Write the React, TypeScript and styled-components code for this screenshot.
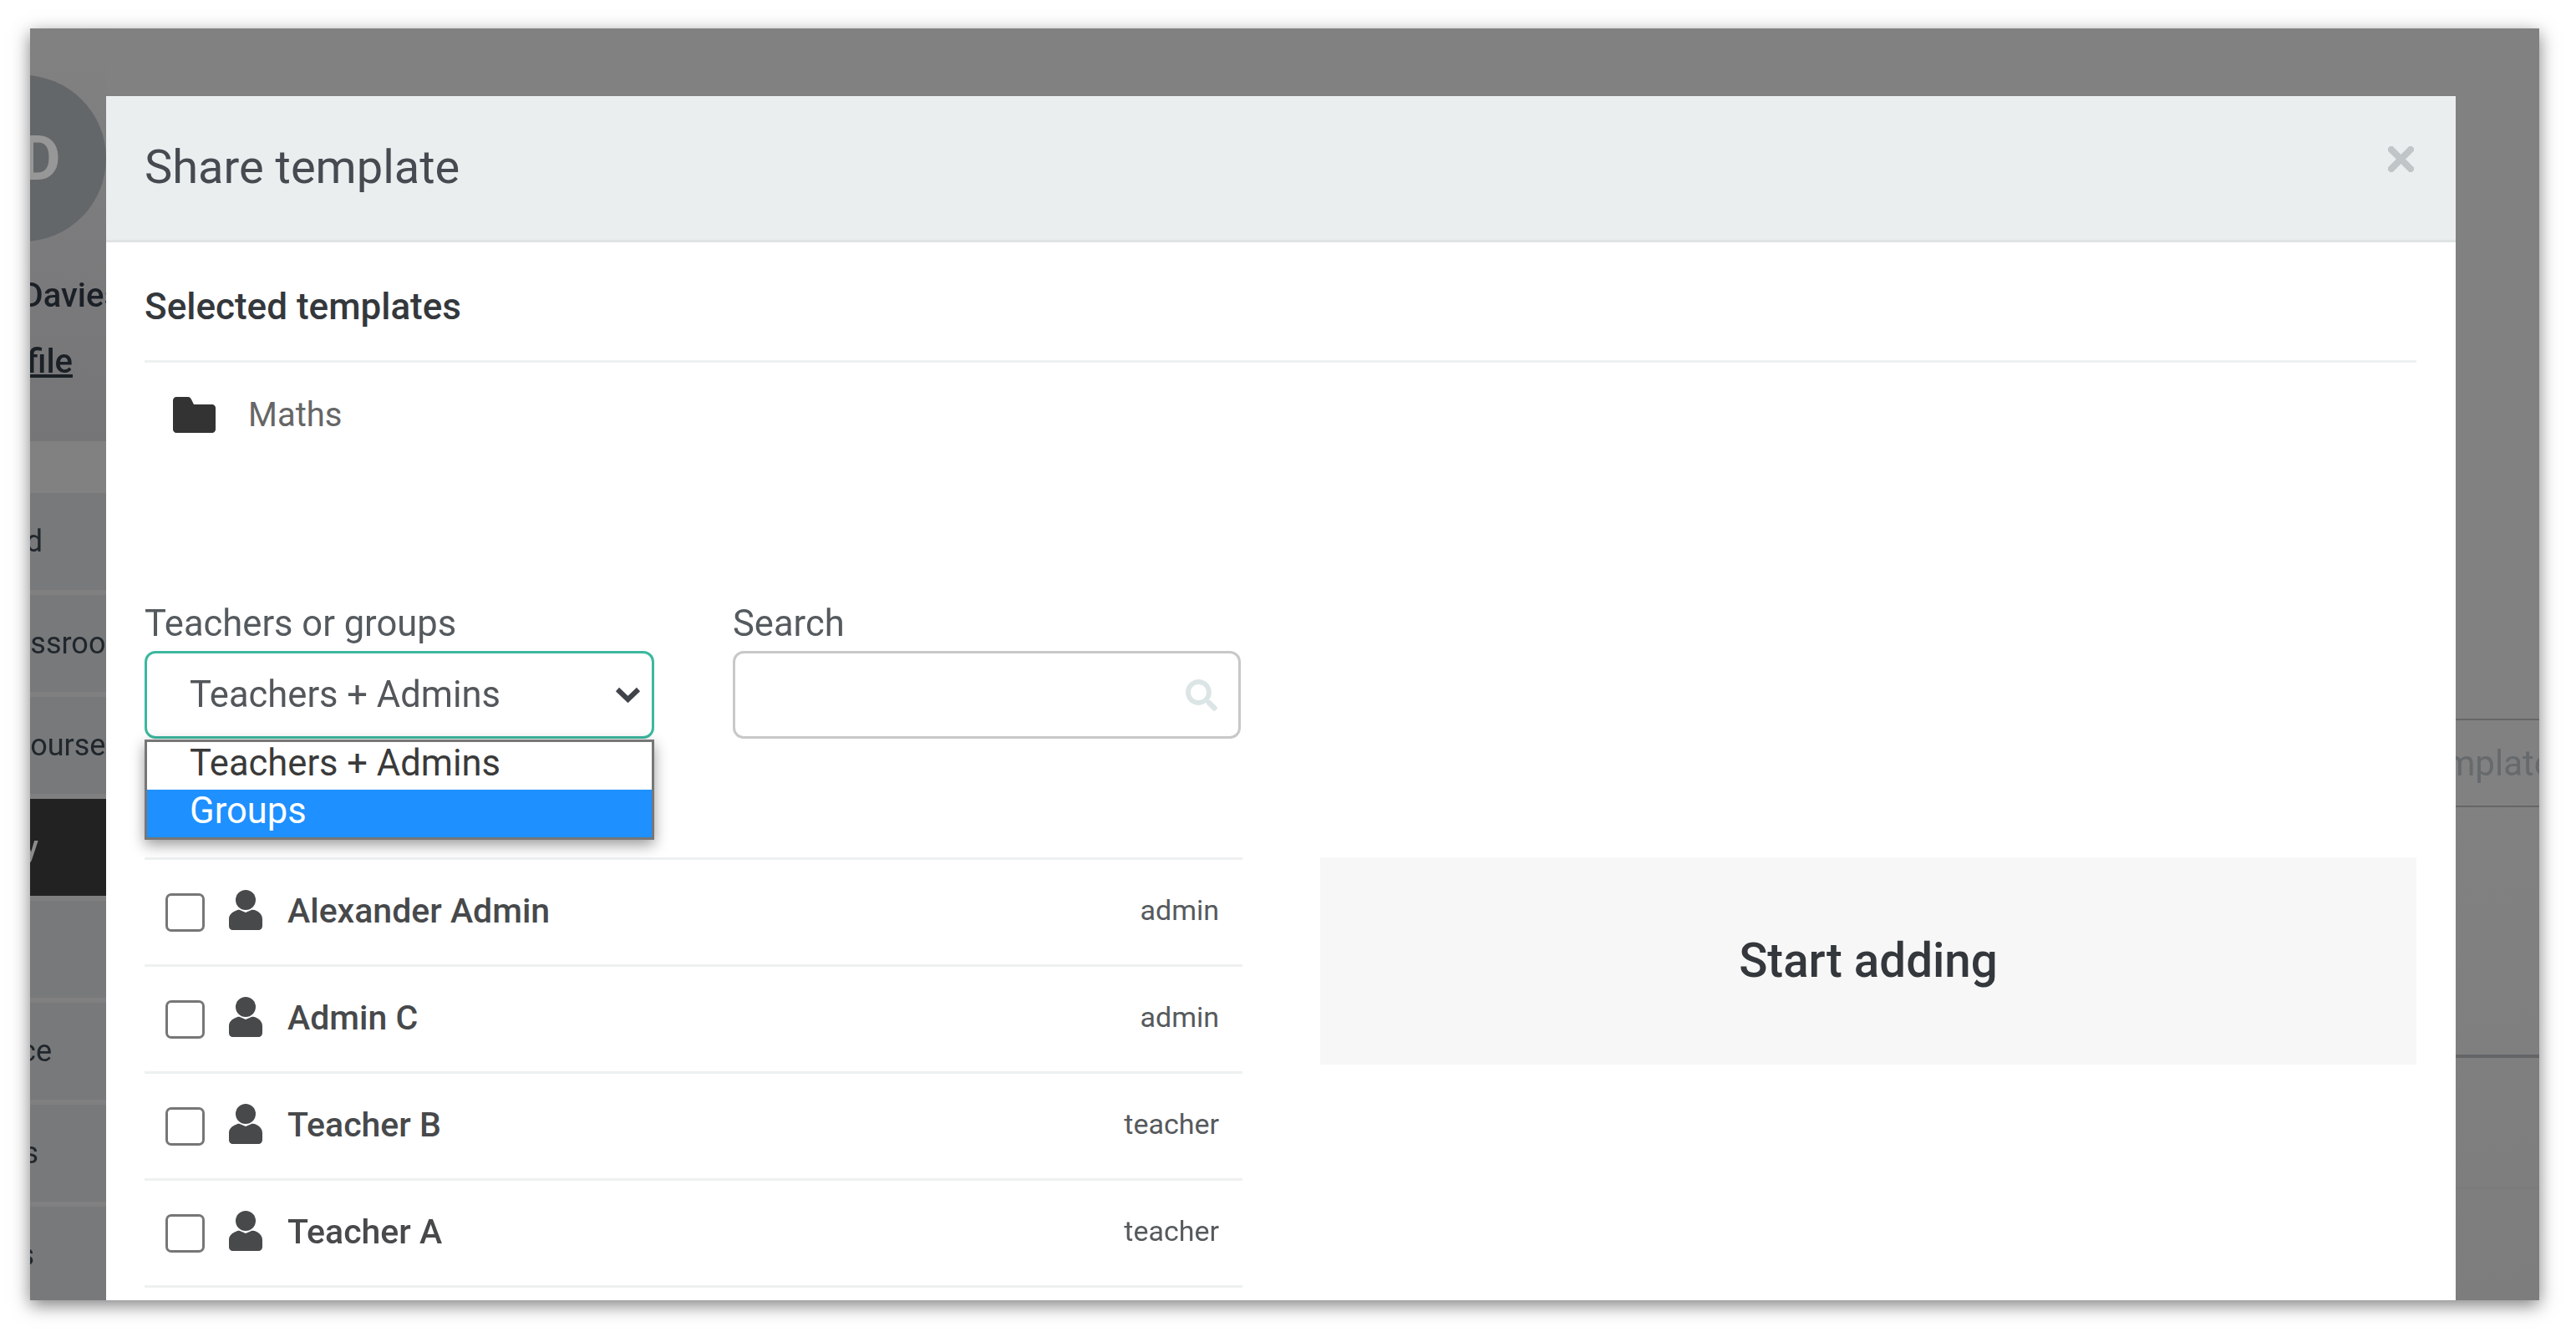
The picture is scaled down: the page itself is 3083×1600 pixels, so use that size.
import React from 'react';
import styled, { createGlobalStyle } from 'styled-components';
import { FaSearch } from 'react-icons/fa';

const GlobalStyle = createGlobalStyle`
  html, body {
    margin: 0;
    padding: 0;
    background: #fff;
    font-family: Roboto, "Liberation Sans", sans-serif;
  }
`;

const Page = styled.div`
  width: 3083px;
  height: 1600px;
  padding: 34px 44px 44px 36px;
  box-sizing: border-box;
  filter: blur(0.7px);
`;

const Frame = styled.div`
  height: 1522px;
  display: grid;
  grid-template-columns: 91px 2812px 100px;
  overflow: hidden;
  background: #818181;
  box-shadow: 0 6px 20px rgba(0, 0, 0, 0.5);
`;

const Sidebar = styled.aside`
  display: flex;
  flex-direction: column;
  min-width: 0;
  overflow: hidden;
`;

const Profile = styled.div`
  height: 494px;
  flex: none;
  padding-top: 56px;
  box-sizing: border-box;
  background: linear-gradient(#818181, #808081 15%, #757577);
`;

const Avatar = styled.div`
  width: 199px;
  height: 199px;
  box-sizing: border-box;
  padding-right: 6px;
  margin-left: -108px;
  border-radius: 50%;
  background: #646769;
  color: #979797;
  font-size: 74px;
  font-weight: 700;
  letter-spacing: -2px;
  display: flex;
  align-items: center;
  justify-content: center;
`;

const ProfileLine = styled.div<{ $right: number; $top: number; $under?: boolean }>`
  display: flex;
  justify-content: flex-end;
  margin-top: ${(p) => p.$top}px;
  margin-right: ${(p) => p.$right}px;
  font-size: 40px;
  line-height: 46px;
  font-weight: 500;
  color: #1a2026;
  white-space: nowrap;
  text-decoration: ${(p) => (p.$under ? 'underline' : 'none')};
`;

const NavGap = styled.div`
  height: 62px;
  flex: none;
`;

const NavItem = styled.div<{ $dark?: boolean }>`
  height: 116px;
  flex: none;
  display: flex;
  align-items: center;
  justify-content: flex-end;
  border-bottom: 6px solid #808080;
  background: ${(p) => (p.$dark ? '#222222' : '#78797a')};
  color: ${(p) => (p.$dark ? '#8c8c8c' : '#1f262c')};
  font-size: 36px;
  font-weight: ${(p) => (p.$dark ? 500 : 400)};
  white-space: nowrap;
`;

const NavLabel = styled.span<{ $right: number }>`
  margin-right: ${(p) => p.$right}px;
`;

const Modal = styled.section`
  margin-top: 81px;
  height: 1441px;
  background: #fff;
  display: flex;
  flex-direction: column;
  min-width: 0;
`;

const ModalHeader = styled.header`
  height: 172px;
  flex: none;
  padding: 0 50px 0 46px;
  display: flex;
  align-items: center;
  justify-content: space-between;
  background: #eaeeef;
  border-bottom: 3px solid #e0e3e4;
`;

const ModalTitle = styled.h2`
  margin: -2px 0 0;
  font-size: 56px;
  font-weight: 400;
  color: #454b50;
`;

const CloseIcon = styled.svg`
  width: 31px;
  height: 31px;
  margin-top: -22px;
`;

const ModalBody = styled.div`
  flex: 1;
  padding: 0 47px 0 46px;
`;

const SectionHeading = styled.div`
  height: 144px;
  box-sizing: border-box;
  padding-top: 52px;
  font-size: 44px;
  line-height: 50px;
  font-weight: 500;
  color: #34383c;
  border-bottom: 3px solid #eef1f1;
`;

const TemplateRow = styled.div`
  height: 118px;
  box-sizing: border-box;
  padding: 6px 0 0 34px;
  display: flex;
  align-items: center;
  gap: 39px;
  font-size: 40px;
  color: #666;
`;

const Columns = styled.div`
  display: grid;
  grid-template-columns: 1314px 1312px;
  column-gap: 93px;
  margin-top: 169px;
`;

const LeftColumn = styled.div`
  display: flex;
  flex-direction: column;
`;

const Filters = styled.div`
  height: 305px;
  display: grid;
  grid-template-columns: 610px 608px;
  column-gap: 94px;
  align-content: start;
`;

const Field = styled.div`
  position: relative;
`;

const FieldLabel = styled.label`
  display: block;
  height: 58px;
  font-size: 43.5px;
  line-height: 52px;
  color: #555a5e;
`;

const SelectBox = styled.div`
  height: 105px;
  box-sizing: border-box;
  padding: 0 13px 0 51px;
  display: flex;
  align-items: center;
  justify-content: space-between;
  border: 3px solid #3cb89f;
  border-radius: 13px;
  font-size: 43.5px;
  color: #53575b;
  background: #fff;
`;

const Chevron = styled.svg`
  width: 31px;
  height: 21px;
`;

const Dropdown = styled.ul`
  position: absolute;
  left: 0;
  right: 0;
  top: 164px;
  margin: 0;
  padding: 0;
  list-style: none;
  border: 3px solid #767676;
  background: #fff;
  box-shadow: 0 6px 16px rgba(0, 0, 0, 0.4);
`;

const DropdownItem = styled.li<{ $active?: boolean }>`
  height: 57px;
  padding-left: 51px;
  font-size: 43.5px;
  line-height: 52px;
  background: ${(p) => (p.$active ? '#1e90ff' : '#fff')};
  color: ${(p) => (p.$active ? '#fff' : '#3a3a3a')};
`;

const SearchBox = styled.div`
  height: 105px;
  box-sizing: border-box;
  padding: 0 25px 0 30px;
  display: flex;
  align-items: center;
  border: 3px solid #c8c8c8;
  border-radius: 13px;
  color: #dce5e6;
`;

const SearchInput = styled.input`
  flex: 1;
  min-width: 0;
  border: 0;
  outline: 0;
  background: transparent;
  font-size: 43px;
`;

const UserList = styled.ul`
  margin: 0;
  padding: 0;
  list-style: none;
  border-top: 3px solid #eef1f1;
`;

const UserRow = styled.li`
  height: 125px;
  padding: 0 28px 0 25px;
  display: flex;
  align-items: center;
  border-bottom: 3px solid #eef1f1;
`;

const Checkbox = styled.span`
  width: 47px;
  height: 46px;
  box-sizing: border-box;
  flex: none;
  border: 3px solid #767676;
  border-radius: 7px;
  background: #fff;
`;

const PersonIcon = styled.svg`
  width: 40px;
  height: 48px;
  flex: none;
  margin: -5px 30px 0 29px;
`;

const UserName = styled.span`
  flex: 1;
  font-size: 41px;
  font-weight: 500;
  color: #47494b;
  margin-top: -4px;
`;

const UserRole = styled.span`
  font-size: 34px;
  color: #565a5d;
  margin-top: -6px;
`;

const StartPanel = styled.div`
  height: 248px;
  margin-top: 305px;
  display: flex;
  align-items: center;
  justify-content: center;
  background: #f7f7f7;
  font-size: 56.5px;
  font-weight: 500;
  color: #34383c;
`;

const RightRail = styled.aside`
  display: flex;
  flex-direction: column;
  overflow: hidden;
  background: linear-gradient(#818181 60%, #7d7d7d);
`;

const RailSpace = styled.div<{ $height: number; $line?: string }>`
  height: ${(p) => p.$height}px;
  flex: none;
  box-sizing: border-box;
  border-bottom: ${(p) => p.$line || 'none'};
`;

const RailButton = styled.div`
  height: 104px;
  flex: none;
  box-sizing: border-box;
  display: flex;
  align-items: center;
  justify-content: flex-end;
  border-bottom: 2px solid #666;
  font-size: 42px;
  color: #666a6d;
  white-space: nowrap;
`;

const RailLabel = styled.span`
  margin-right: -16px;
`;

const users = [
  { name: 'Alexander Admin', role: 'admin' },
  { name: 'Admin C', role: 'admin' },
  { name: 'Teacher B', role: 'teacher' },
  { name: 'Teacher A', role: 'teacher' },
];

const navItems = [
  { label: 'Dashboard', right: 76 },
  { label: 'Classroom', right: -31 },
  { label: 'Courses', right: -18 },
  { label: 'Library', right: 81, dark: true },
  { label: '', right: 0 },
  { label: 'Attendance', right: 65 },
  { label: 'Reports', right: 81 },
  { label: 'Settings', right: 86 },
];

const App: React.FC = () => {
  return (
    <Page>
      <GlobalStyle />
      <Frame>
        <Sidebar>
          <Profile>
            <Avatar>DD</Avatar>
            <ProfileLine $right={-18} $top={42}>D Davies</ProfileLine>
            <ProfileLine $right={40} $top={33} $under>Profile</ProfileLine>
          </Profile>
          <NavGap />
          {navItems.map((item, i) => (
            <NavItem key={i} $dark={item.dark}>
              <NavLabel $right={item.right}>{item.label}</NavLabel>
            </NavItem>
          ))}
        </Sidebar>

        <Modal>
          <ModalHeader>
            <ModalTitle>Share template</ModalTitle>
            <CloseIcon viewBox="0 0 31 31">
              <path d="M4 4 L27 27 M27 4 L4 27" stroke="#c0c6c8" strokeWidth="8" strokeLinecap="square" fill="none" />
            </CloseIcon>
          </ModalHeader>
          <ModalBody>
            <SectionHeading>Selected templates</SectionHeading>
            <TemplateRow>
              <svg width="51" height="43" viewBox="0 0 51 43">
                <path
                  d="M4 0 H18 C20 0 21 1 22 3 L25 9 H47 C49 9 51 11 51 13 V39 C51 41 49 43 47 43 H4 C2 43 0 41 0 39 V4 C0 2 2 0 4 0Z"
                  fill="#333"
                />
              </svg>
              Maths
            </TemplateRow>
            <Columns>
              <LeftColumn>
                <Filters>
                  <Field>
                    <FieldLabel>Teachers or groups</FieldLabel>
                    <SelectBox>
                      Teachers + Admins
                      <Chevron viewBox="0 0 31 21">
                        <path d="M3 4 L15.5 16 L28 4" stroke="#40444a" strokeWidth="6" fill="none" />
                      </Chevron>
                    </SelectBox>
                    <Dropdown>
                      <DropdownItem>Teachers + Admins</DropdownItem>
                      <DropdownItem $active>Groups</DropdownItem>
                    </Dropdown>
                  </Field>
                  <Field>
                    <FieldLabel>Search</FieldLabel>
                    <SearchBox>
                      <SearchInput />
                      <FaSearch size={38} />
                    </SearchBox>
                  </Field>
                </Filters>
                <UserList>
                  {users.map((user) => (
                    <UserRow key={user.name}>
                      <Checkbox />
                      <PersonIcon viewBox="0 0 40 48">
                        <circle cx="20" cy="12" r="12" fill="#47494b" />
                        <path
                          d="M8 25 C10 24 12 23.5 13 24 L20 27 L27 24 C29 23.5 31 24 33 25 C37 27 40 30 40 35 V43 C40 46 38 48 35 48 H5 C2 48 0 46 0 43 V35 C0 30 3 27 8 25Z"
                          fill="#47494b"
                        />
                      </PersonIcon>
                      <UserName>{user.name}</UserName>
                      <UserRole>{user.role}</UserRole>
                    </UserRow>
                  ))}
                </UserList>
              </LeftColumn>
              <StartPanel>Start adding</StartPanel>
            </Columns>
          </ModalBody>
        </Modal>

        <RightRail>
          <RailSpace $height={828} $line="2px solid #666" />
          <RailButton>
            <RailLabel>Template</RailLabel>
          </RailButton>
          <RailSpace $height={300} $line="4px solid #636567" />
          <RailSpace $height={156} $line="1px solid #777" />
        </RightRail>
      </Frame>
    </Page>
  );
};

export default App;
